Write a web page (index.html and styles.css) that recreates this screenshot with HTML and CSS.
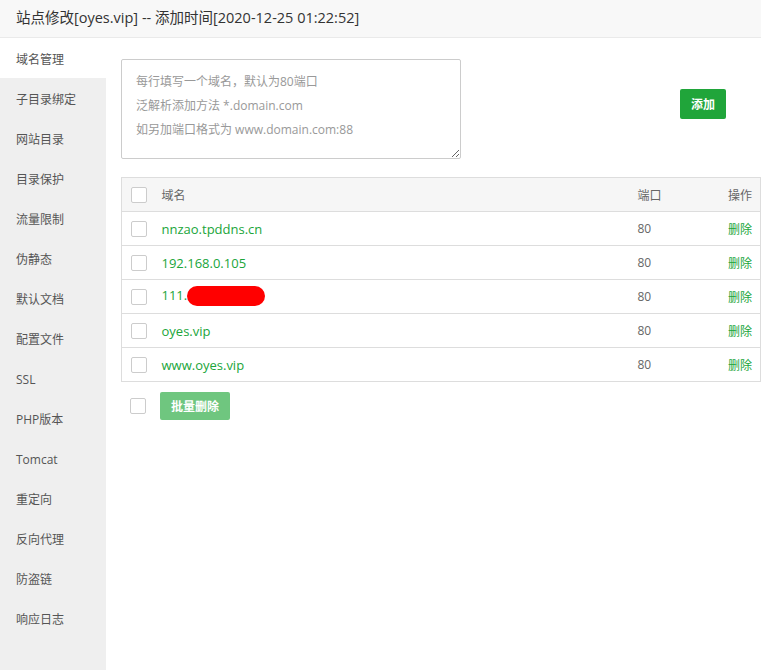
FILE: index.html
```html
<!DOCTYPE html>
<html>
<head>
<meta charset="utf-8">
<link rel="stylesheet" href="styles.css">
</head>
<body>
<div class="title">站点修改[oyes.vip] -- 添加时间[2020-12-25 01:22:52]</div>
<div class="main">
  <ul class="side">
    <li class="active">域名管理</li>
    <li>子目录绑定</li>
    <li>网站目录</li>
    <li>目录保护</li>
    <li>流量限制</li>
    <li>伪静态</li>
    <li>默认文档</li>
    <li>配置文件</li>
    <li>SSL</li>
    <li>PHP版本</li>
    <li>Tomcat</li>
    <li>重定向</li>
    <li>反向代理</li>
    <li>防盗链</li>
    <li>响应日志</li>
  </ul>
  <div class="content">
    <div class="addrow">
      <textarea class="domains" placeholder="每行填写一个域名，默认为80端口&#10;泛解析添加方法 *.domain.com&#10;如另加端口格式为 www.domain.com:88"></textarea>
      <button class="btn-add">添加</button>
    </div>
    <table class="tbl">
      <thead>
        <tr><th class="c-chk"><span class="chk"></span></th><th>域名</th><th class="c-port">端口</th><th class="c-op">操作</th></tr>
      </thead>
      <tbody>
        <tr><td class="c-chk"><span class="chk"></span></td><td class="dom">nnzao.tpddns.cn</td><td class="c-port">80</td><td class="c-op"><a>删除</a></td></tr>
        <tr><td class="c-chk"><span class="chk"></span></td><td class="dom">192.168.0.105</td><td class="c-port">80</td><td class="c-op"><a>删除</a></td></tr>
        <tr><td class="c-chk"><span class="chk"></span></td><td class="dom">111.<span class="redact"></span></td><td class="c-port">80</td><td class="c-op"><a>删除</a></td></tr>
        <tr><td class="c-chk"><span class="chk"></span></td><td class="dom">oyes.vip</td><td class="c-port">80</td><td class="c-op"><a>删除</a></td></tr>
        <tr><td class="c-chk"><span class="chk"></span></td><td class="dom">www.oyes.vip</td><td class="c-port">80</td><td class="c-op"><a>删除</a></td></tr>
      </tbody>
    </table>
    <div class="bulk">
      <span class="chk"></span>
      <button class="btn-bulk">批量删除</button>
    </div>
  </div>
</div>
</body>
</html>
```
FILE: styles.css
```css
* { box-sizing: border-box; }
html, body { margin: 0; padding: 0; }
body {
  width: 761px;
  height: 670px;
  overflow: hidden;
  background: #fff;
  font-family: "Open Sans", "Noto Sans CJK SC", sans-serif;
  color: #555;
}
.title {
  height: 38px;
  line-height: 36px;
  padding-left: 16px;
  font-size: 14.5px;
  color: #333;
  background: #f8f8f8;
  border-bottom: 1px solid #eaeaea;
}
.main {
  display: flex;
  height: 632px;
}
.side {
  list-style: none;
  margin: 0;
  padding: 0;
  width: 106px;
  flex: none;
  background: #efefef;
}
.side li {
  height: 40px;
  line-height: 40px;
  padding: 2px 0 0 16px;
  font-size: 12px;
  color: #555;
}
.side li.active { background: #fff; }
.content {
  flex: 1;
  padding: 21px 0 0 15px;
}
.addrow {
  display: flex;
  align-items: flex-start;
}
.domains {
  width: 340px;
  height: 100px;
  border: 1px solid #ccc;
  border-radius: 2px;
  padding: 10px 14px;
  font-family: "Open Sans", "Noto Sans CJK SC", sans-serif;
  font-size: 12px;
  line-height: 24px;
  resize: both;
  margin: 0;
  outline: none;
}
.domains::placeholder { color: #999; }
.btn-add {
  margin: 30px 0 0 219px;
  width: 46px;
  height: 30px;
  border: none;
  border-radius: 2px;
  background: #20a53a;
  color: #fff;
  font-family: "Open Sans", "Noto Sans CJK SC", sans-serif;
  font-size: 12px;
  font-weight: bold;
  padding: 0;
}
.tbl {
  margin-top: 18px;
  width: 640px;
  border-collapse: collapse;
  border: 1px solid #ddd;
  font-size: 12px;
}
.tbl th, .tbl td {
  height: 34px;
  padding: 0;
  text-align: left;
  border-bottom: 1px solid #ddd;
  font-weight: normal;
  color: #666;
}
.tbl thead th { background: #f6f6f6; }
.tbl .c-chk { width: 40px; padding-left: 9px; }
.tbl .c-port { width: 73px; }
.tbl .c-op { width: 50px; text-align: right; padding-right: 8px; }
.tbl .c-op a { color: #20a53a; }
.tbl .dom { color: #20a53a; font-size: 13px; }
.chk {
  display: inline-block;
  width: 16px;
  height: 16px;
  border: 1px solid #ccc;
  border-radius: 2px;
  background: #fff;
  vertical-align: middle;
}
.redact {
  display: inline-block;
  width: 78px;
  height: 20px;
  border-radius: 10px;
  background: #ff0000;
  vertical-align: middle;
  margin-left: 0;
  position: relative;
  top: -1px;
}
.bulk {
  display: flex;
  align-items: center;
  margin-top: 10px;
  padding-left: 9px;
  gap: 14px;
}
.btn-bulk {
  width: 70px;
  height: 28px;
  border: none;
  border-radius: 2px;
  background: #6fc67f;
  color: #fff;
  font-family: "Open Sans", "Noto Sans CJK SC", sans-serif;
  font-size: 12px;
  font-weight: bold;
  padding: 0;
}
```
